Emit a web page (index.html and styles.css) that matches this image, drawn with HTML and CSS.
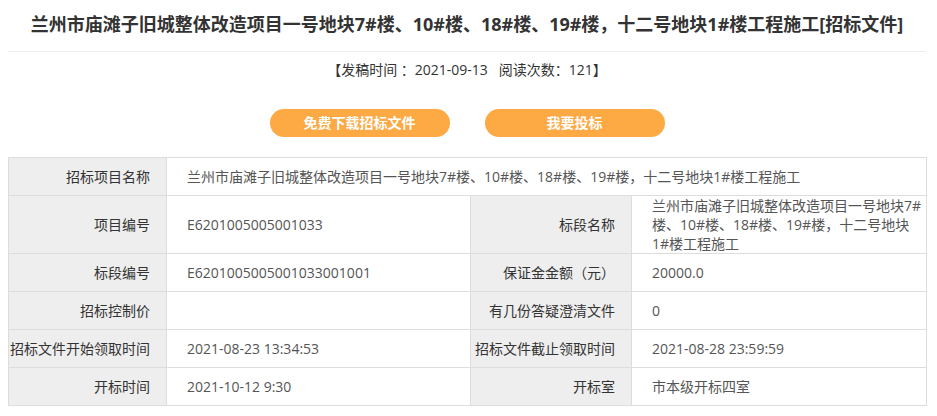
FILE: index.html
```html
<!DOCTYPE html>
<html lang="zh-CN">
<head>
<meta charset="utf-8">
<title>招标文件</title>
<link rel="stylesheet" href="styles.css">
</head>
<body>
<div class="page">
  <h1 class="title">兰州市庙滩子旧城整体改造项目一号地块7#楼、10#楼、18#楼、19#楼，十二号地块1#楼工程施工[招标文件]</h1>
  <div class="meta">【发稿时间 ：2021-09-13&nbsp;&nbsp;&nbsp;阅读次数：121】</div>
  <div class="actions">
    <a class="btn" href="#">免费下载招标文件</a>
    <a class="btn" href="#">我要投标</a>
  </div>
  <table class="info">
    <colgroup>
      <col class="c-label1">
      <col class="c-val1">
      <col class="c-label2">
      <col class="c-val2">
    </colgroup>
    <tr>
      <th>招标项目名称</th>
      <td colspan="3">兰州市庙滩子旧城整体改造项目一号地块7#楼、10#楼、18#楼、19#楼，十二号地块1#楼工程施工</td>
    </tr>
    <tr>
      <th>项目编号</th>
      <td>E6201005005001033</td>
      <th>标段名称</th>
      <td>兰州市庙滩子旧城整体改造项目一号地块7#楼、10#楼、18#楼、19#楼，十二号地块1#楼工程施工</td>
    </tr>
    <tr>
      <th>标段编号</th>
      <td>E6201005005001033001001</td>
      <th>保证金金额（元）</th>
      <td>20000.0</td>
    </tr>
    <tr>
      <th>招标控制价</th>
      <td></td>
      <th>有几份答疑澄清文件</th>
      <td>0</td>
    </tr>
    <tr>
      <th>招标文件开始领取时间</th>
      <td>2021-08-23 13:34:53</td>
      <th>招标文件截止领取时间</th>
      <td>2021-08-28 23:59:59</td>
    </tr>
    <tr>
      <th>开标时间</th>
      <td>2021-10-12 9:30</td>
      <th>开标室</th>
      <td>市本级开标四室</td>
    </tr>
  </table>
</div>
</body>
</html>
```

FILE: styles.css
```css
html, body {
  margin: 0;
  padding: 0;
  background: #fff;
}
body {
  padding: 0 8px;
  font-family: "Open Sans", "Noto Sans CJK SC", "Microsoft YaHei", sans-serif;
  color: #333;
}
.page {
  width: 918px;
}
.title {
  margin: 0;
  padding: 8px 0 11px;
  font-size: 18px;
  line-height: 32px;
  font-weight: bold;
  text-align: center;
  color: #333;
  border-bottom: 1px solid #eee;
  white-space: nowrap;
}
.meta {
  padding-top: 8px;
  font-size: 14px;
  line-height: 20px;
  text-align: center;
  color: #333;
}
.actions {
  display: flex;
  justify-content: center;
  gap: 35px;
  margin-top: 29px;
}
.btn {
  display: block;
  width: 180px;
  height: 28px;
  line-height: 28px;
  border-radius: 14px;
  background: #fda944;
  color: #fff;
  font-size: 14px;
  font-weight: bold;
  text-align: center;
  text-decoration: none;
}
.info {
  margin-top: 20px;
  width: 918px;
  border-collapse: collapse;
  table-layout: fixed;
  font-size: 14px;
}
.c-label1 { width: 158px; }
.c-val1 { width: 304px; }
.c-label2 { width: 161px; }
.c-val2 { width: 295px; }
.info th,
.info td {
  border: 1px solid #ddd;
  height: 37px;
  line-height: 19px;
  vertical-align: middle;
}
.info th {
  background: #eee;
  color: #333;
  font-weight: normal;
  text-align: right;
  padding: 0 16px 0 0;
  white-space: nowrap;
}
.info td {
  color: #555;
  text-align: left;
  padding: 0 3px 0 20px;
}
```
